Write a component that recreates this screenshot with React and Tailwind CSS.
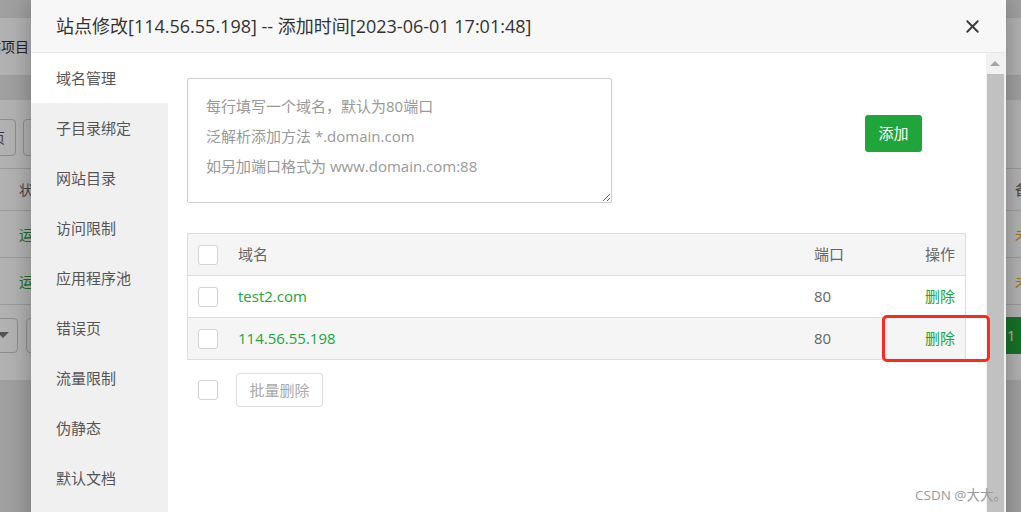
import { X } from "lucide-react";

const font = { fontFamily: "'Open Sans', 'Noto Sans CJK SC', sans-serif" };

const menu = ["域名管理", "子目录绑定", "网站目录", "访问限制", "应用程序池", "错误页", "流量限制", "伪静态", "默认文档"];

const domains = [
  { name: "test2.com", port: 80, hover: false },
  { name: "114.56.55.198", port: 80, hover: true },
];

const Checkbox = () => (
  <span className="block w-[20px] h-[20px] border border-[#d2d2d2] rounded-[3px] bg-white" />
);

// the site list page that sits behind the modal
const BackgroundPage = () => (
  <div className="flex flex-col w-full h-[512px] bg-[#e6e6e6]">
    <div className="h-[18px]" />
    <div className="h-[57px] bg-white flex items-center">
      <span className="w-[29px] overflow-hidden whitespace-nowrap text-[14px] text-[#333] flex justify-end">
        <span className="shrink-0">首页 网站项目</span>
      </span>
    </div>
    <div className="h-[25px]" />
    <div className="bg-white h-[280px] flex flex-col">
      <div className="h-[68px] flex items-center pt-[6px]">
        <div className="ml-[-30px] w-[46px] h-[37px] border border-[#ccc] rounded-[4px] flex items-center justify-end pr-[10px] text-[14px] text-[#555] overflow-hidden whitespace-nowrap">
          <span className="shrink-0">主页</span>
        </div>
        <div className="ml-[7px] w-[60px] h-[37px] border border-[#ccc] rounded-[4px]" />
      </div>
      <div className="grid grid-cols-[31px_984px_1fr] h-[43px] border-y border-[#ddd] items-center text-[14px] text-[#666]">
        <span className="pl-[19px] overflow-hidden whitespace-nowrap">状</span>
        <span />
        <span className="whitespace-nowrap">备注</span>
      </div>
      {[0, 1].map((i) => (
        <div key={i} className="grid grid-cols-[31px_984px_1fr] h-[47px] border-b border-[#ddd] items-center text-[14px]">
          <span className="pl-[19px] overflow-hidden whitespace-nowrap text-[#20a53a]">运</span>
          <span />
          <span className="whitespace-nowrap text-[#f0a020]">未设置</span>
        </div>
      ))}
      <div className="grid grid-cols-[1006px_1fr] h-[60px] items-center">
        <div className="flex items-center ml-[-40px]">
          <div className="w-[58px] h-[35px] border border-[#ccc] rounded-[4px] flex items-center justify-end pr-[8px]">
            <span className="w-0 h-0 border-l-[6px] border-r-[6px] border-t-[6px] border-l-transparent border-r-transparent border-t-[#777]" />
          </div>
          <div className="ml-[8px] w-[60px] h-[35px] border border-[#ccc] rounded-[4px]" />
        </div>
        <div className="h-[37px] bg-[#20a53a] text-white text-[15px] flex items-center pl-[1px]">1</div>
      </div>
    </div>
  </div>
);

const App = () => {
  return (
    <div className="relative w-full h-[512px] overflow-hidden" style={font}>
      <BackgroundPage />
      <div className="absolute inset-0 bg-black/30" />

      {/* Dialog */}
      <div className="absolute left-[31px] top-0 w-[975px] h-[560px] bg-white flex flex-col shadow-[0_0_24px_rgba(0,0,0,0.3)]">
        <div className="h-[53px] shrink-0 bg-[#f7f7f7] border-b border-[#e7e7e7] flex items-center justify-between pl-[25px] pr-[23px]">
          <h3 className="text-[18px] text-[#333] font-normal">
            站点修改[114.56.55.198] -- 添加时间[2023-06-01 17:01:48]
          </h3>
          <X size={21} strokeWidth={2.2} className="text-[#3c3c3c]" />
        </div>

        <div className="flex flex-1">
          {/* Sidebar */}
          <div className="w-[137px] shrink-0 bg-[#f0f0f0] flex flex-col">
            {menu.map((m, i) => (
              <div
                key={m}
                className={`h-[50px] flex items-center pl-[25px] text-[15px] leading-[20px] text-[#555] ${i === 0 ? "bg-white" : ""}`}
              >
                {m}
              </div>
            ))}
          </div>

          {/* Content */}
          <div className="flex-1 pl-[19px] pt-[25px]">
            <div className="flex items-start">
              <textarea
                className="w-[425px] h-[125px] border border-[#ccc] rounded-[2px] pl-[18px] pt-[12px] text-[15px] leading-[30px] text-[#333] placeholder:text-[#999] outline-none"
                placeholder={"每行填写一个域名，默认为80端口\n泛解析添加方法 *.domain.com\n如另加端口格式为 www.domain.com:88"}
              />
              <button className="ml-[253px] mt-[37px] w-[57px] h-[37px] bg-[#20a53a] rounded-[3px] text-white text-[15px]">
                添加
              </button>
            </div>

            <div className="mt-[30px] w-[779px] border-x border-t border-[#ddd]">
              <div className="h-[42px] flex items-center border-b border-[#ddd] bg-[#f5f5f5] text-[15px] text-[#666]">
                <div className="w-[50px] pl-[10px]"><Checkbox /></div>
                <div className="flex-1">域名</div>
                <div className="w-[80px]">端口</div>
                <div className="w-[71px] pr-[10px] text-right">操作</div>
              </div>
              {domains.map((d) => (
                <div
                  key={d.name}
                  className={`h-[42px] flex items-center border-b border-[#ddd] ${d.hover ? "bg-[#f5f5f5]" : "bg-white"}`}
                >
                  <div className="w-[50px] pl-[10px]"><Checkbox /></div>
                  <div className="flex-1 text-[15px] text-[#20a53a]">{d.name}</div>
                  <div className="w-[80px] text-[15px] text-[#666]">{d.port}</div>
                  <div className="w-[71px] pr-[10px] text-right text-[15px] text-[#20a53a]">删除</div>
                </div>
              ))}
            </div>

            <div className="mt-[13px] flex items-center">
              <div className="w-[49px] pl-[11px]"><Checkbox /></div>
              <button className="w-[87px] h-[34px] border border-[#ddd] rounded-[3px] text-[15px] text-[#aaa] bg-white">
                批量删除
              </button>
            </div>
          </div>

          {/* Scrollbar */}
          <div className="w-[20px] shrink-0 bg-[#f1f1f1] flex flex-col items-center pr-[2px]">
            <div className="h-[21px] flex items-center justify-center">
              <span className="w-0 h-0 border-l-[5px] border-r-[5px] border-b-[5px] border-l-transparent border-r-transparent border-b-[#a3a3a3]" />
            </div>
            <div className="w-[17px] flex-1 bg-[#c1c1c1]" />
          </div>
        </div>
      </div>

      {/* Annotation */}
      <div className="absolute left-[882px] top-[315px] w-[108px] h-[47px] border-[3px] border-[#fa2a1d] rounded-[5px]" />

      <div className="absolute left-[915px] top-[485px] text-[13.5px] text-[#999] whitespace-nowrap">
        CSDN @大大。
      </div>
    </div>
  );
};

export default App;
